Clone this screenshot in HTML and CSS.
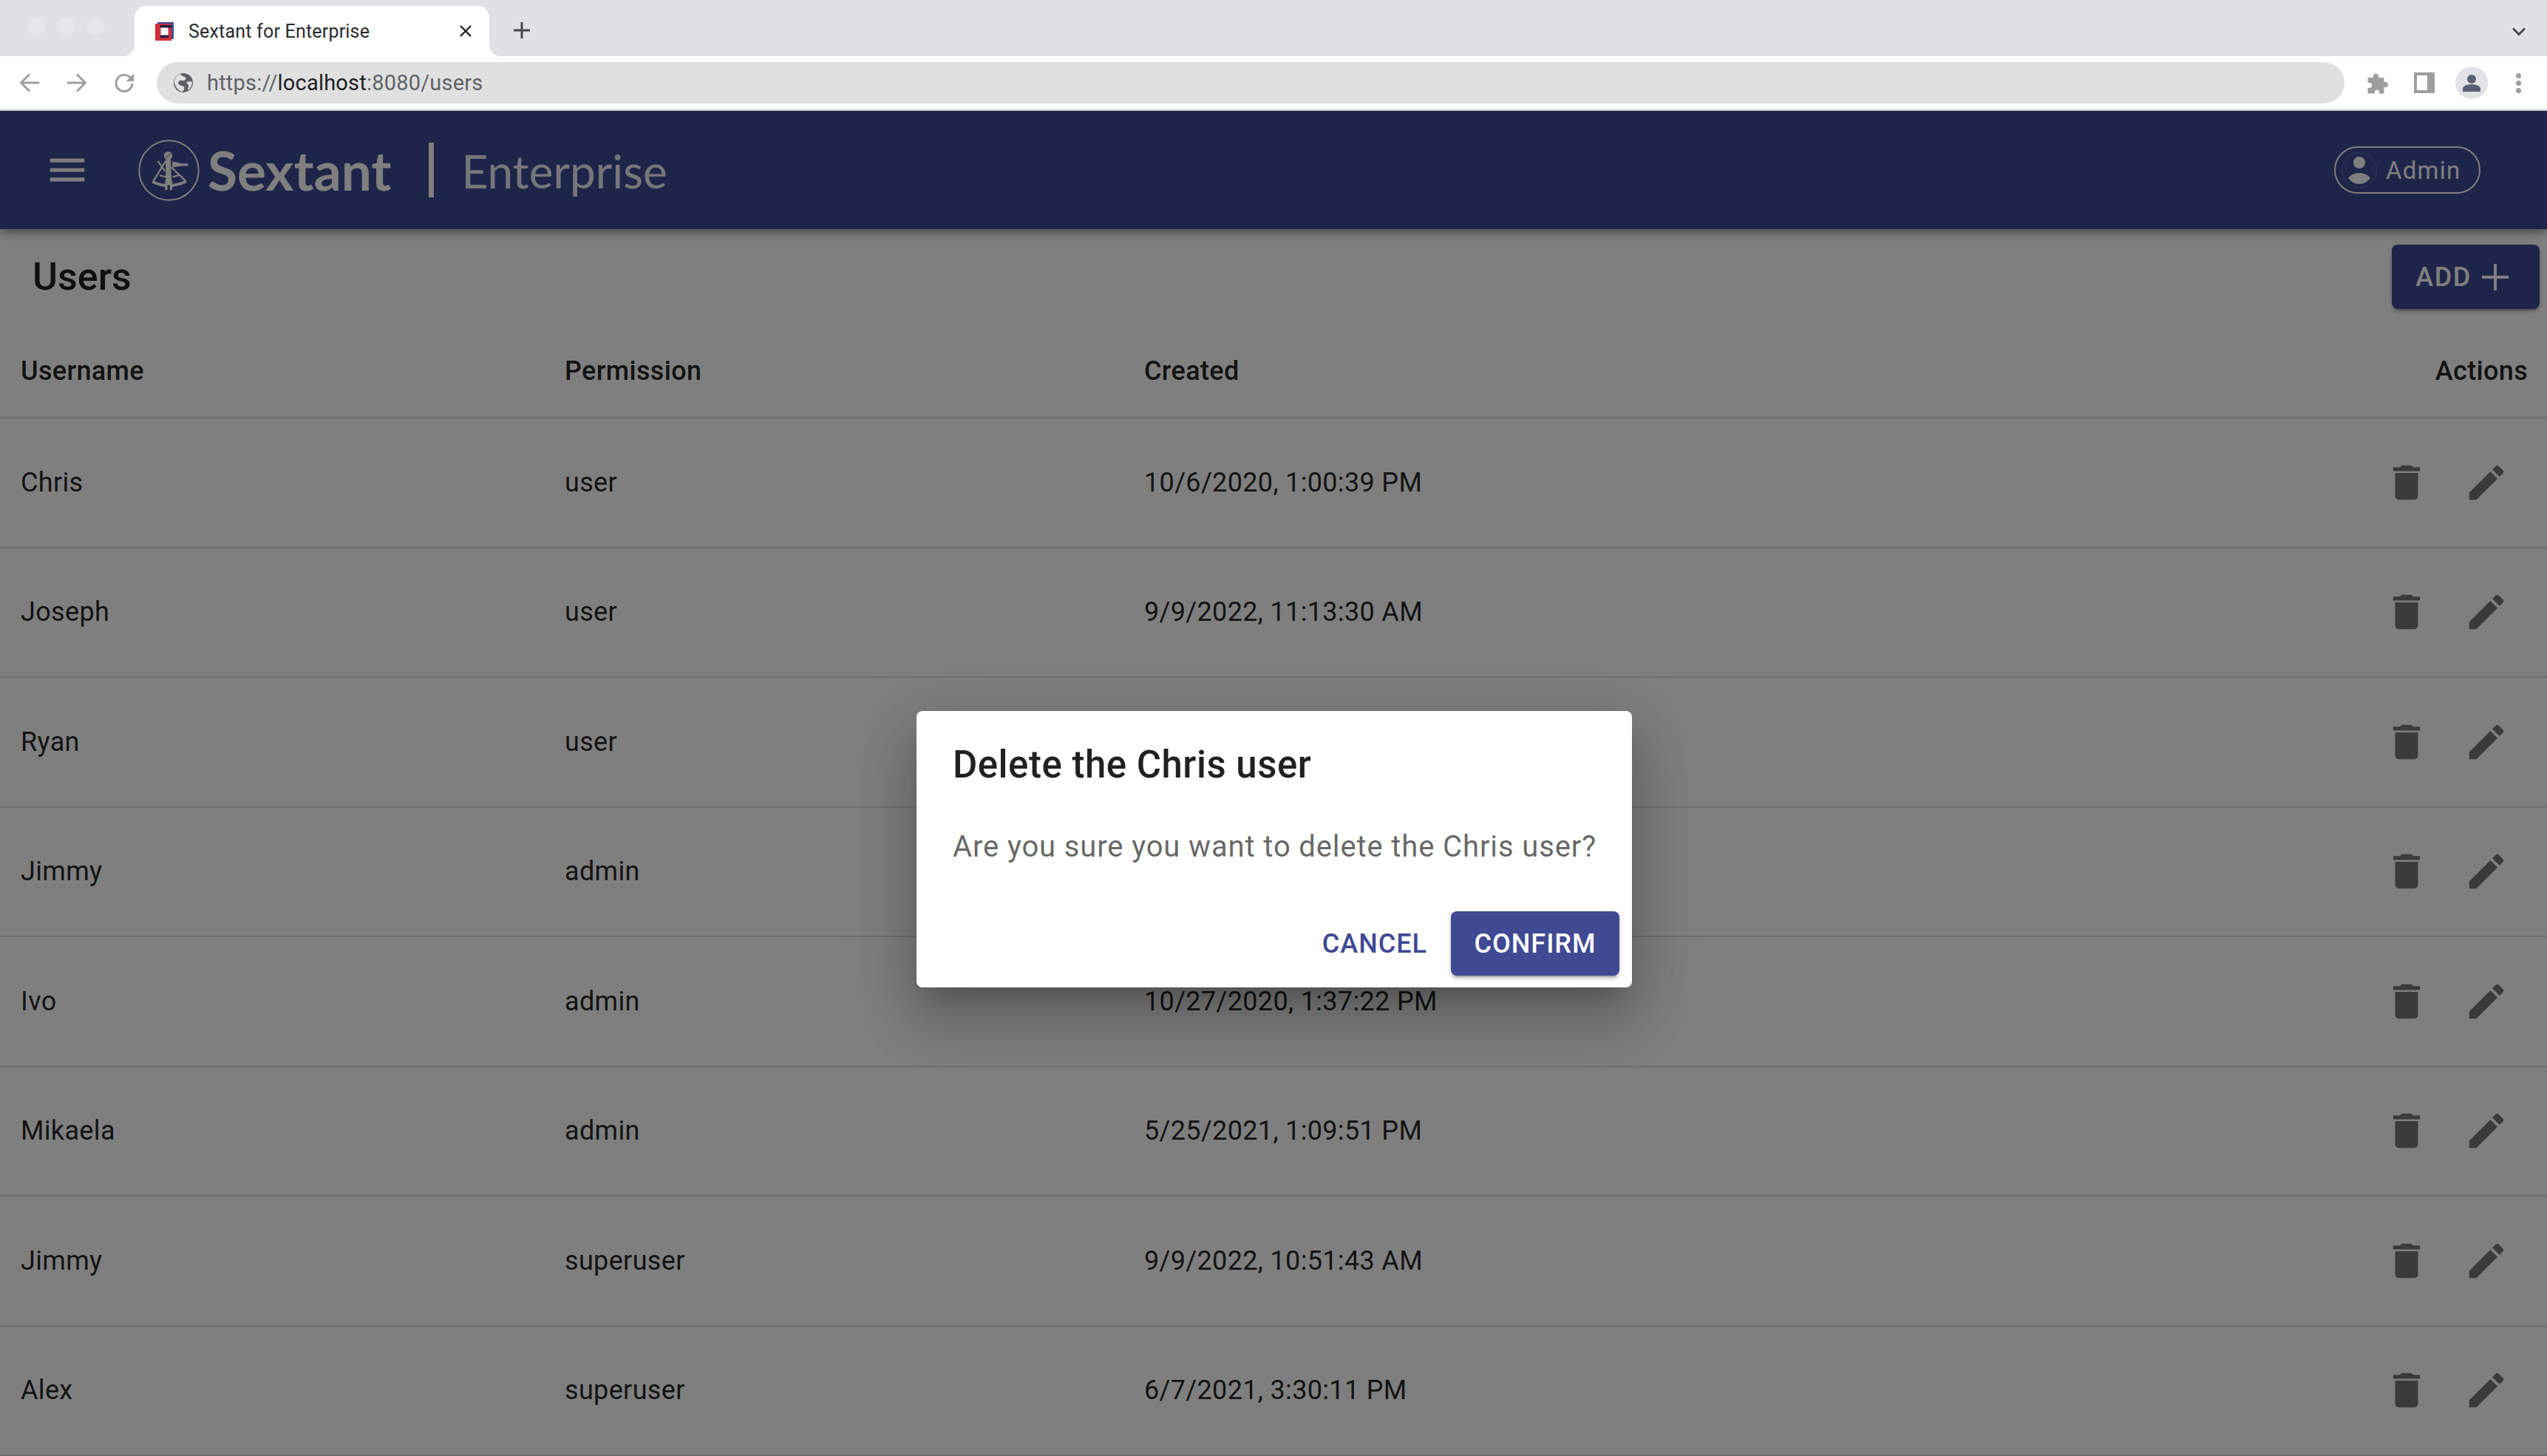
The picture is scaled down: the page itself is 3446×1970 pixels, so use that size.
FILE: index.html
```html
<!DOCTYPE html>
<html lang="en">
<head>
  <meta charset="UTF-8">
  <title>Sextant for Enterprise</title>
  <link rel="stylesheet" href="styles.css">
</head>
<body>
  <svg class="defs" width="0" height="0">
    <symbol id="i-trash" viewBox="0 0 24 24"><path d="M6 19c0 1.1.9 2 2 2h8c1.1 0 2-.9 2-2V7H6v12zM19 4h-3.5l-1-1h-5l-1 1H5v2h14V4z"/></symbol>
    <symbol id="i-edit" viewBox="0 0 24 24"><path d="M3 17.25V21h3.75L17.81 9.94l-3.75-3.75L3 17.25zM20.71 7.04c.39-.39.39-1.02 0-1.41l-2.34-2.34c-.39-.39-1.02-.39-1.41 0l-1.83 1.83 3.75 3.75 1.83-1.83z"/></symbol>
  </svg>

  <!-- browser chrome -->
  <div class="tabstrip">
    <div class="lights"><span></span><span></span><span></span></div>
    <div class="tab">
      <svg class="favicon" viewBox="0 0 25 25">
        <rect x="3" width="22" height="23" fill="#3f4a93"/>
        <rect y="2" width="22" height="23" fill="#d0303c"/>
        <rect x="7" y="4" width="15" height="3.500" fill="#1b1f3f"/>
        <rect x="7" y="17.500" width="11" height="3.500" fill="#1b1f3f"/>
        <rect x="7.500" y="7.500" width="10" height="10" fill="#fff"/>
      </svg>
      <span class="tab-title">Sextant for Enterprise</span>
      <svg class="tab-close" viewBox="0 0 16 16"><path d="M1 1l14 14M15 1L1 15" stroke="#202124" stroke-width="2.4" fill="none"/></svg>
    </div>
    <svg class="newtab" viewBox="0 0 24 24"><path d="M12 1v22M1 12h22" stroke="#45474b" stroke-width="3" fill="none"/></svg>
    <svg class="tab-more" viewBox="0 0 18 12"><path d="M1 1.500l8 8 8-8" stroke="#45474b" stroke-width="3" fill="none"/></svg>
  </div>
  <div class="toolbar">
    <svg class="nav-icon" viewBox="0 0 26 26"><path d="M26 13H2M13 1.500L1.500 13 13 24.500" stroke="#9e9e9e" stroke-width="3" fill="none"/></svg>
    <svg class="nav-icon" viewBox="0 0 26 26"><path d="M0 13h24M13 1.500L24.500 13 13 24.500" stroke="#9e9e9e" stroke-width="3" fill="none"/></svg>
    <svg class="nav-icon" viewBox="0 0 27 26"><path d="M23 7A11.500 11.500 0 1 0 25 14" stroke="#9e9e9e" stroke-width="3" fill="none"/><path d="M27 0v11H16z" fill="#9e9e9e"/></svg>
    <div class="addressbar">
      <svg class="globe" viewBox="0 0 26 26">
        <circle cx="13" cy="13" r="13" fill="#5f6063"/>
        <path d="M9 1c1 3 5 3 7 5s-2 5-5 4-6 2-4 5 6 1 7 4-1 5-3 6c-4-1-9-6-10-12S5 2 9 1zM18 12c3-1 6-1 7 0 0 4-2 8-5 11-2-1 1-5 0-7s-4-3-2-4z" fill="#e0e0e0"/>
      </svg>
      <span class="url">https://<b>localhost</b>:8080/users</span>
    </div>
    <svg class="ext-icon" viewBox="0 0 29 29"><path d="M3 7h6V5a3.500 3.500 0 0 1 7 0v2h6c1 0 1.500.5 1.500 1.500V13h2a3.500 3.500 0 0 1 0 7h-2v7c0 1-.5 1.500-1.500 1.500h-5v-2a3 3 0 0 0-6 0v2H3c-1 0-1.500-.5-1.500-1.500v-6h2a3.500 3.500 0 0 0 0-7h-2V8.500C1.500 7.500 2 7 3 7z" fill="#9e9e9e"/></svg>
    <div class="side-icon"><span></span></div>
    <div class="profile">
      <svg viewBox="0 0 44 44"><circle cx="22" cy="17" r="6" fill="#596074"/><path d="M10 34v-4c0-4 7-6 12-6s12 2 12 6v4z" fill="#596074"/></svg>
    </div>
    <div class="kebab"><span></span><span></span><span></span></div>
  </div>

  <div class="app">
    <header class="appbar">
      <svg class="menu-icon" viewBox="0 0 24 24"><path d="M3 18h18v-2H3v2zm0-5h18v-2H3v2zm0-7v2h18V6H3z"/></svg>
      <svg class="logo-mark" viewBox="78 53 250 250">
        <circle cx="203" cy="178" r="121" fill="none" stroke="#fff" stroke-width="6"/>
        <g fill="none" stroke="#fff" stroke-width="7">
          <path d="M158 140l30 42M190 140l-52 84M213 165l60 58"/>
          <path d="M166 199l26 6M218 205l28-8"/>
          <path d="M136 224q65 32 136 0" stroke-width="11"/>
        </g>
        <circle cx="200" cy="118" r="17" fill="#fff"/>
        <path d="M190 128l20-20" stroke="#3f4a93" stroke-width="3"/>
        <path d="M190 130h20l4 90h3v38h-30v-38h3z" fill="#fff"/>
        <path d="M217 141l38 9h26v10h-26l-38 6z" fill="#fff"/>
        <rect x="197" y="238" width="10" height="20" fill="#3f4a93"/>
      </svg>
      <span class="logo-name">Sextant</span>
      <span class="logo-sep"></span>
      <span class="logo-sub">Enterprise</span>
      <div class="chip">
        <svg class="chip-avatar" viewBox="0 0 48 48">
          <circle cx="24" cy="24" r="23.500" fill="none" stroke="#fff" stroke-width=".6" opacity=".35"/>
          <circle cx="24" cy="14" r="8" fill="#fff"/>
          <path d="M9 35c4-5 9-7 15-7s11 2 15 7c-4 5-9 8-15 8s-11-3-15-8z" fill="#fff"/>
        </svg>
        <span>Admin</span>
      </div>
    </header>

    <div class="titlebar">
      <h1>Users</h1>
      <button class="btn-add">ADD
        <svg viewBox="0 0 36 36"><path d="M18 0v36M0 18h36" stroke="#fff" stroke-width="4" fill="none"/></svg>
      </button>
    </div>

    <table class="users">
      <thead>
        <tr>
          <th class="c-name">Username</th>
          <th class="c-perm">Permission</th>
          <th>Created</th>
          <th class="c-act">Actions</th>
        </tr>
      </thead>
      <tbody>
        <tr>
          <td>Chris</td><td>user</td><td>10/6/2020, 1:00:39 PM</td>
          <td class="c-act"><span class="act"><svg><use href="#i-trash"/></svg></span><span class="act"><svg><use href="#i-edit"/></svg></span></td>
        </tr>
        <tr>
          <td>Joseph</td><td>user</td><td>9/9/2022, 11:13:30 AM</td>
          <td class="c-act"><span class="act"><svg><use href="#i-trash"/></svg></span><span class="act"><svg><use href="#i-edit"/></svg></span></td>
        </tr>
        <tr>
          <td>Ryan</td><td>user</td><td></td>
          <td class="c-act"><span class="act"><svg><use href="#i-trash"/></svg></span><span class="act"><svg><use href="#i-edit"/></svg></span></td>
        </tr>
        <tr>
          <td>Jimmy</td><td>admin</td><td></td>
          <td class="c-act"><span class="act"><svg><use href="#i-trash"/></svg></span><span class="act"><svg><use href="#i-edit"/></svg></span></td>
        </tr>
        <tr>
          <td>Ivo</td><td>admin</td><td>10/27/2020, 1:37:22 PM</td>
          <td class="c-act"><span class="act"><svg><use href="#i-trash"/></svg></span><span class="act"><svg><use href="#i-edit"/></svg></span></td>
        </tr>
        <tr>
          <td>Mikaela</td><td>admin</td><td>5/25/2021, 1:09:51 PM</td>
          <td class="c-act"><span class="act"><svg><use href="#i-trash"/></svg></span><span class="act"><svg><use href="#i-edit"/></svg></span></td>
        </tr>
        <tr>
          <td>Jimmy</td><td>superuser</td><td>9/9/2022, 10:51:43 AM</td>
          <td class="c-act"><span class="act"><svg><use href="#i-trash"/></svg></span><span class="act"><svg><use href="#i-edit"/></svg></span></td>
        </tr>
        <tr>
          <td>Alex</td><td>superuser</td><td>6/7/2021, 3:30:11 PM</td>
          <td class="c-act"><span class="act"><svg><use href="#i-trash"/></svg></span><span class="act"><svg><use href="#i-edit"/></svg></span></td>
        </tr>
      </tbody>
    </table>

    <div class="backdrop">
      <div class="dialog">
        <h2>Delete the Chris user</h2>
        <p>Are you sure you want to delete the Chris user?</p>
        <div class="dialog-actions">
          <button class="btn-text">CANCEL</button>
          <button class="btn-confirm">CONFIRM</button>
        </div>
      </div>
    </div>
  </div>
</body>
</html>
```

FILE: styles.css
```css
html, body { margin: 0; height: 100%; overflow: hidden; }
body { font-family: Roboto, sans-serif; background: #fff; color: rgba(0,0,0,.87); }
.defs { position: absolute; }

/* browser chrome */
.tabstrip { height: 76px; background: #dfe1e5; display: flex; align-items: flex-end; }
.lights { display: flex; gap: 17px; padding: 0 0 29px 38px; width: 182px; box-sizing: border-box; flex: none; }
.lights span { width: 23px; height: 23px; border-radius: 50%; background: #e6e7ea; }
.tab {
  position: relative;
  width: 480px;
  height: 68px;
  background: #fff;
  border-radius: 16px 16px 0 0;
  display: flex;
  align-items: center;
  padding: 0 24px 0 28px;
  box-sizing: border-box;
}
.tab::before, .tab::after { content: ""; position: absolute; bottom: 0; width: 16px; height: 16px; }
.tab::before { left: -16px; background: radial-gradient(circle at 0 0, transparent 16px, #fff 16.5px); }
.tab::after { right: -16px; background: radial-gradient(circle at 100% 0, transparent 16px, #fff 16.5px); }
.favicon { width: 25px; height: 25px; flex: none; }
.tab-title { margin-left: 20px; font-size: 25px; letter-spacing: .2px; color: #2a2b2f; flex: 1; white-space: nowrap; }
.tab-close { width: 16px; height: 16px; }
.newtab { width: 24px; height: 24px; margin: 0 0 23px 32px; }
.tab-more { width: 18px; height: 12px; margin: 0 29px 27px auto; }

.toolbar { height: 72px; border-bottom: 2px solid #ccc; display: flex; align-items: center; background: #fff; }
.nav-icon { width: 26px; height: 26px; margin-left: 27px; margin-right: 11px; flex: none; }
.nav-icon + .nav-icon { margin-left: 27px; }
.addressbar {
  width: 2960px;
  height: 56px;
  margin-left: 20px;
  border-radius: 28px;
  background: #e0e0e0;
  display: flex;
  align-items: center;
  padding-left: 23px;
  box-sizing: border-box;
}
.globe { width: 26px; height: 26px; }
.url { margin-left: 19px; font-size: 29px; letter-spacing: .2px; color: #5f6368; }
.url b { font-weight: 400; color: #202124; }
.ext-icon { width: 29px; height: 29px; margin-left: 30px; }
.side-icon { width: 28px; height: 28px; margin-left: 35px; background: #9e9e9e; box-sizing: border-box; padding: 4px 10px 4px 4px; }
.side-icon span { display: block; height: 100%; background: #fff; }
.profile { width: 44px; height: 44px; border-radius: 50%; background: #e0e2e6; margin-left: 28px; }
.profile svg { display: block; }
.kebab { margin-left: 38px; display: flex; flex-direction: column; gap: 3px; }
.kebab span { width: 7px; height: 7px; border-radius: 50%; background: #9e9e9e; }

/* app */
.app { position: relative; height: 1820px; overflow: hidden; background: #fff; }
.appbar {
  height: 160px;
  background: #3f4a93;
  color: #fff;
  display: flex;
  align-items: center;
  box-shadow: 0 4px 8px -2px rgba(0,0,0,.2), 0 8px 10px 0 rgba(0,0,0,.14), 0 2px 20px 0 rgba(0,0,0,.12);
  position: relative;
}
.menu-icon { width: 62px; height: 62px; fill: #fff; margin-left: 60px; flex: none; }
.logo-mark { width: 83px; height: 83px; margin-left: 65px; flex: none; }
.logo-name { font-family: Lato, sans-serif; font-weight: 700; font-size: 73px; margin-left: 11px; }
.logo-sep { width: 7px; height: 74px; background: #fff; margin-left: 50px; }
.logo-sub { font-family: Lato, sans-serif; font-size: 62px; margin-left: 38px; padding-top: 2px; opacity: .9; }
.chip {
  margin-left: auto;
  margin-right: 90px;
  width: 198px;
  height: 64px;
  border: 2px solid #fff;
  border-radius: 32px;
  box-sizing: border-box;
  display: flex;
  align-items: center;
  padding-left: 8px;
  font-size: 33px;
  letter-spacing: 1.2px;
}
.chip-avatar { width: 48px; height: 48px; flex: none; }
.chip span { margin-left: 12px; }

.titlebar { display: flex; justify-content: space-between; align-items: flex-start; padding: 21px 10px 22px 44px; }
.titlebar h1 { margin: 0; font-size: 52px; font-weight: 500; line-height: 87px; }
.btn-add {
  width: 200px;
  height: 87px;
  background: #3f4a93;
  color: #fff;
  border: none;
  border-radius: 8px;
  font: 500 36px Roboto, sans-serif;
  letter-spacing: 1.5px;
  display: flex;
  align-items: center;
  justify-content: center;
  gap: 14px;
  padding: 0 10px 0 0;
  box-shadow: 0 6px 2px -4px rgba(0,0,0,.2), 0 4px 4px 0 rgba(0,0,0,.14), 0 2px 10px 0 rgba(0,0,0,.12);
}
.btn-add svg { width: 36px; height: 36px; }

.users { width: 100%; table-layout: fixed; border-collapse: collapse; font-size: 36px; letter-spacing: .34px; }
.users th { height: 124px; text-align: left; font-weight: 500; padding: 0 28px; border-bottom: 2px solid #e0e0e0; }
.users td { height: 175.5px; padding: 0 28px; border-bottom: 2px solid #e0e0e0; box-sizing: border-box; }
.c-name { width: 680px; }
.c-perm { width: 728px; }
.users th.c-act, .users td.c-act { text-align: right; width: 400px; white-space: nowrap; }
.users th.c-act { padding-right: 26px; }
.act { display: inline-flex; width: 108px; justify-content: center; vertical-align: middle; }
.act svg { width: 62px; height: 62px; fill: rgba(0,0,0,.54); display: block; }

/* dialog */
.backdrop {
  position: absolute;
  inset: 0;
  background: rgba(0,0,0,.5);
  display: flex;
  justify-content: center;
  align-items: flex-start;
  padding: 812px 0 0 2px;
  box-sizing: border-box;
}
.dialog {
  width: 968px;
  height: 374px;
  background: #fff;
  border-radius: 8px;
  box-sizing: border-box;
  padding: 45px 17px 16px 49px;
  display: flex;
  flex-direction: column;
  box-shadow: 0 22px 30px -14px rgba(0,0,0,.2), 0 48px 76px 6px rgba(0,0,0,.14), 0 18px 92px 16px rgba(0,0,0,.12);
}
.dialog h2 { margin: 0; font-size: 51px; font-weight: 500; line-height: 56px; letter-spacing: .5px; color: rgba(0,0,0,.87); }
.dialog p { margin: 59px 0 0; font-size: 40px; line-height: 48px; letter-spacing: .87px; color: rgba(0,0,0,.6); white-space: nowrap; }
.dialog-actions { margin-top: auto; display: flex; justify-content: flex-end; align-items: center; gap: 16px; }
.btn-text, .btn-confirm {
  height: 87px;
  border: none;
  border-radius: 8px;
  font: 500 36px Roboto, sans-serif;
  letter-spacing: 1px;
  background: none;
  padding: 0 16px;
}
.btn-text { color: #3f4a93; }
.btn-confirm {
  width: 228px;
  padding: 0;
  background: #3f4a93;
  color: #fff;
  box-shadow: 0 6px 2px -4px rgba(0,0,0,.2), 0 4px 4px 0 rgba(0,0,0,.14), 0 2px 10px 0 rgba(0,0,0,.12);
}
```
